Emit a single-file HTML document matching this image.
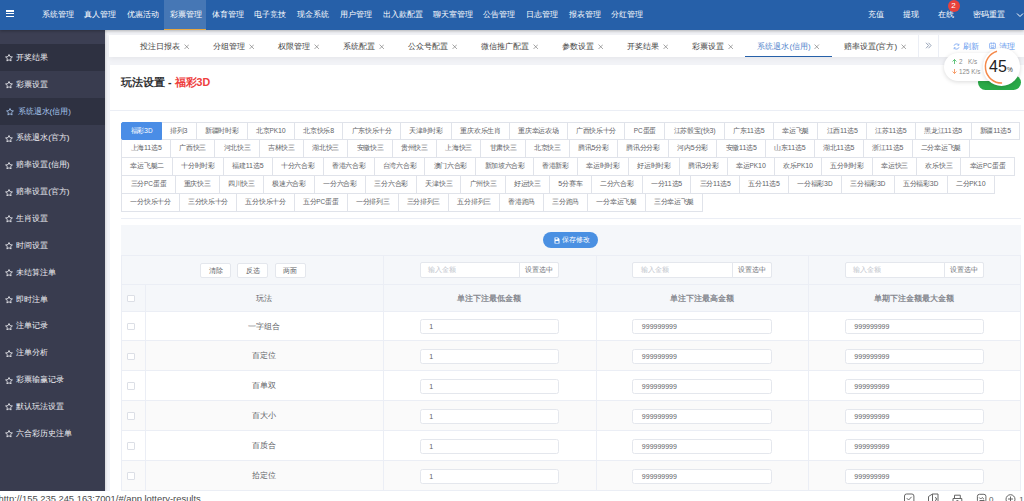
<!DOCTYPE html>
<html><head><meta charset="utf-8">
<style>
*{box-sizing:border-box;margin:0;padding:0}
html,body{width:1024px;height:501px;overflow:hidden;background:#f2f3f7;font-family:"Liberation Sans",sans-serif;color:#606266;position:relative}
div,span,svg{position:absolute}
#hdr{left:0;top:0;width:1024px;height:30px;background:#2660a9;box-shadow:0 1px 3px rgba(0,0,0,.28);z-index:5}
#hdr .hb{left:5.5px;width:8.2px;height:1.5px;background:#fff}
#hdr .mi{top:0;height:30px;line-height:29px;margin-left:0;font-size:8px;color:#fff;white-space:nowrap}
#hdr .actbg{left:164px;top:0;width:42px;height:30px;background:#4677b5;border-bottom:1.6px solid #e6a740}
#hdr .badge{left:947.5px;top:0;width:12px;height:12px;border-radius:50%;background:#e8413c;color:#fff;font-size:8px;line-height:12px;text-align:center}
#hdr .chev{left:1016px;top:12px}
#side{left:0;top:30px;width:105px;height:461px;background:#393c4f;z-index:3;box-shadow:1px 0 2px rgba(0,0,0,.12)}
#side .strip{left:0;top:0;width:105px;height:14px;background:#3c3f53}
#side .it{left:0;width:105px;height:26.86px;font-size:8px;color:#f0f0f4;white-space:nowrap}
#side .it span{top:0.9px;line-height:26.86px}
#side .it.dk{background:#2e3141}
#side .it.on{color:#a6c6ee}
#tabs{left:109px;top:35px;width:915px;height:22px;background:#fff;box-shadow:0 2px 5px rgba(0,0,0,.05)}
#tabs .tl{left:19.4px;top:0;height:22px;display:flex}
#tabs .t{position:relative;height:22px;line-height:23.6px;font-size:8px;color:#3d3d3d;white-space:nowrap;padding:0 12px 0 12px}
#tabs .t .x{position:relative;display:inline-block;margin-left:3.5px;vertical-align:-0.2px;color:#777}
#tabs .t.on{color:#5586cc;border-bottom:1.5px solid #2660a9}
#tabs .sep{top:0;width:1px;height:22px;background:#ebeef5}
#tabs .more{left:815.7px;top:7.4px}
#tabs .tool{top:0;height:22px;font-size:8px;color:#5b95ee;white-space:nowrap}
#tabs .tool span{top:0;line-height:22px}
#card{left:110px;top:65px;width:914px;height:436px;background:#fff}
#card .ttl{left:0;padding-left:11px;top:0;height:46.2px;line-height:34.5px;font-size:10.7px;font-weight:bold;color:#303133;white-space:nowrap;width:914px;border-bottom:1px solid #ebeef5}
#card .ttl span{position:static}
#card .red{color:#ee3d3d}
#lot{left:121.3px;top:121.5px;width:903px}
#lot .lr{position:relative;display:flex;margin-top:-1px}
#lot .lr:first-child{margin-top:0}
#lot .lb{position:relative;height:18.9px;line-height:16px;font-size:7px;letter-spacing:-0.3px;padding:0 var(--p);border:1px solid #e0e3ea;margin-left:-1px;background:#fff;white-space:nowrap;color:#606266}
#lot .lb:first-child{margin-left:0}
#lot .lb b{position:static;font-weight:normal;font-size:7px;letter-spacing:0}
#lot .lb u{position:static;text-decoration:none;font-size:6.4px}
#lot .lb.on{background:#4a8de6;border-color:#4a8de6;color:#fff;z-index:2;border-radius:2px 0 0 2px}
.hl{left:121px;width:899.6px;height:1px;background:#ebeef5}
#tbl{left:121px;top:225px;width:899.6px;height:266px;background:#f5f7fa}
#tbl .save{left:422.4px;top:7.4px;width:55.1px;height:15.6px;border-radius:8px;background:#4a90e2;color:#fff;font-size:7px}
#tbl .save span{left:19px;top:0;line-height:15.6px;white-space:nowrap}
#tbl .rowline{left:0;width:899.6px;height:1px;background:#ebeef5}
#tbl .fbtn{top:37.6px;width:31px;height:15px;border:1px solid #e4e7ed;border-radius:2px;background:#fff;font-size:7px;line-height:13px;text-align:center;color:#606266}
#tbl .ig{width:139.8px;height:15.3px;border:1px solid #e4e7ed;border-radius:2px;background:#fff}
#tbl .ig .ph{left:7.8px;top:0;line-height:13px;font-size:7px;color:#c0c4cc;white-space:nowrap}
#tbl .ig .ap{left:98.6px;top:-1px;width:40.2px;height:15.3px;border:1px solid #e4e7ed;border-radius:0 2px 2px 0;background:#fff;font-size:7px;line-height:13.3px;text-align:center;color:#6b6e75}
#tbl .cb{width:7.6px;height:7.6px;border:1px solid #dcdfe6;border-radius:1px;background:#fff}
#tbl .th{height:26.7px;line-height:30px;text-align:center;font-size:7.8px;color:#606266;white-space:nowrap}
#tbl .th.b{font-weight:bold;color:#85888f}
#tbl .dr{left:0;width:899.6px;height:29.9px;background:#fff;border-bottom:1px solid #ebeef5}
#tbl .dr.s{background:#fafafa}
#tbl .dr .pn{left:24.3px;width:237.8px;top:0;line-height:29px;text-align:center;font-size:7.8px;color:#606266;white-space:nowrap}
#tbl .inp{top:7.5px;width:139.6px;height:15.4px;border:1px solid #e4e7ed;border-radius:2.5px;background:#fff;font-size:7px;line-height:13.4px;padding-left:8.8px;color:#606266;white-space:nowrap}
#tbl .vl{width:1px;background:#ebeef5;z-index:2}
#green{left:978px;top:75px;width:42.8px;height:15px;border-radius:7.5px;background:#2aaa48;z-index:6}
#pill{left:944.1px;top:52.8px;width:60px;height:28px;border-radius:14px;background:#fff;box-shadow:0 1px 4px rgba(0,0,0,.15);z-index:7}
#pill .sp{font-size:6.3px;color:#8a8a8a;white-space:nowrap;line-height:9px}
#pill .sp b{font-weight:normal;margin-right:1px;position:static}
#circ{left:982.8px;top:48.3px;width:37.4px;height:37.4px;border-radius:50%;background:#fff;box-shadow:0 1px 4px rgba(0,0,0,.15);z-index:8}
#circ .n{left:6.2px;top:7.6px;font-size:16px;line-height:22px;color:#222}
#circ .pc{left:24.2px;top:18px;font-size:6.5px;line-height:8px;color:#333}
#status{left:0;top:491px;width:1024px;height:10px;background:#fff;z-index:9}
#status .url{left:-1.5px;top:2.4px;font-size:9.4px;line-height:11px;color:#4a4a4a;white-space:nowrap}

</style></head><body>
<div id="hdr"><div class="hb" style="top:10.2px"></div><div class="hb" style="top:12.9px"></div><div class="hb" style="top:15.6px"></div><div class="actbg"></div><div class="mi" style="left:41.5px">系统管理</div><div class="mi" style="left:84px">真人管理</div><div class="mi" style="left:126.5px">优惠活动</div><div class="mi" style="left:169.5px">彩票管理</div><div class="mi" style="left:212px">体育管理</div><div class="mi" style="left:254px">电子竞技</div><div class="mi" style="left:297px">现金系统</div><div class="mi" style="left:339.5px">用户管理</div><div class="mi" style="left:382.5px">出入款配置</div><div class="mi" style="left:432.5px">聊天室管理</div><div class="mi" style="left:483px">公告管理</div><div class="mi" style="left:526px">日志管理</div><div class="mi" style="left:568.5px">报表管理</div><div class="mi" style="left:611px">分红管理</div><div class="mi" style="left:867.9px">充值</div><div class="mi" style="left:902.9px">提现</div><div class="mi" style="left:938.3px">在线</div><div class="mi" style="left:973.3px">密码重置</div><div class="badge">2</div><svg class="chev" width="8" height="6" viewBox="0 0 8 6"><path d="M1 1.5l3 3 3-3" fill="none" stroke="#fff" stroke-width="1"/></svg></div>
<div id="side"><div class="strip"></div><div class="it dk" style="top:14.00px"><svg width="8" height="7.5" viewBox="1 1.5 22 20.5" style="position:absolute;left:5px;top:10.3px"><path d="M12 2.8l2.8 6 6.6.8-4.9 4.5 1.3 6.5L12 17.3l-5.8 3.3 1.3-6.5-4.9-4.5 6.6-.8z" fill="none" stroke="#f0f0f4" stroke-width="2.3" stroke-linejoin="round"/></svg><span style="left:16.2px">开奖结果</span></div><div class="it" style="top:40.86px"><svg width="8" height="7.5" viewBox="1 1.5 22 20.5" style="position:absolute;left:5px;top:10.3px"><path d="M12 2.8l2.8 6 6.6.8-4.9 4.5 1.3 6.5L12 17.3l-5.8 3.3 1.3-6.5-4.9-4.5 6.6-.8z" fill="none" stroke="#f0f0f4" stroke-width="2.3" stroke-linejoin="round"/></svg><span style="left:16.2px">彩票设置</span></div><div class="it dk on" style="top:67.72px"><svg width="8" height="7.5" viewBox="1 1.5 22 20.5" style="position:absolute;left:6.4px;top:10.3px"><path d="M12 2.8l2.8 6 6.6.8-4.9 4.5 1.3 6.5L12 17.3l-5.8 3.3 1.3-6.5-4.9-4.5 6.6-.8z" fill="none" stroke="#a6c6ee" stroke-width="2.3" stroke-linejoin="round"/></svg><span style="left:17.6px">系统退水(信用)</span></div><div class="it" style="top:94.58px"><svg width="8" height="7.5" viewBox="1 1.5 22 20.5" style="position:absolute;left:5px;top:10.3px"><path d="M12 2.8l2.8 6 6.6.8-4.9 4.5 1.3 6.5L12 17.3l-5.8 3.3 1.3-6.5-4.9-4.5 6.6-.8z" fill="none" stroke="#f0f0f4" stroke-width="2.3" stroke-linejoin="round"/></svg><span style="left:16.2px">系统退水(官方)</span></div><div class="it" style="top:121.44px"><svg width="8" height="7.5" viewBox="1 1.5 22 20.5" style="position:absolute;left:5px;top:10.3px"><path d="M12 2.8l2.8 6 6.6.8-4.9 4.5 1.3 6.5L12 17.3l-5.8 3.3 1.3-6.5-4.9-4.5 6.6-.8z" fill="none" stroke="#f0f0f4" stroke-width="2.3" stroke-linejoin="round"/></svg><span style="left:16.2px">赔率设置(信用)</span></div><div class="it" style="top:148.30px"><svg width="8" height="7.5" viewBox="1 1.5 22 20.5" style="position:absolute;left:5px;top:10.3px"><path d="M12 2.8l2.8 6 6.6.8-4.9 4.5 1.3 6.5L12 17.3l-5.8 3.3 1.3-6.5-4.9-4.5 6.6-.8z" fill="none" stroke="#f0f0f4" stroke-width="2.3" stroke-linejoin="round"/></svg><span style="left:16.2px">赔率设置(官方)</span></div><div class="it" style="top:175.16px"><svg width="8" height="7.5" viewBox="1 1.5 22 20.5" style="position:absolute;left:5px;top:10.3px"><path d="M12 2.8l2.8 6 6.6.8-4.9 4.5 1.3 6.5L12 17.3l-5.8 3.3 1.3-6.5-4.9-4.5 6.6-.8z" fill="none" stroke="#f0f0f4" stroke-width="2.3" stroke-linejoin="round"/></svg><span style="left:16.2px">生肖设置</span></div><div class="it" style="top:202.02px"><svg width="8" height="7.5" viewBox="1 1.5 22 20.5" style="position:absolute;left:5px;top:10.3px"><path d="M12 2.8l2.8 6 6.6.8-4.9 4.5 1.3 6.5L12 17.3l-5.8 3.3 1.3-6.5-4.9-4.5 6.6-.8z" fill="none" stroke="#f0f0f4" stroke-width="2.3" stroke-linejoin="round"/></svg><span style="left:16.2px">时间设置</span></div><div class="it" style="top:228.88px"><svg width="8" height="7.5" viewBox="1 1.5 22 20.5" style="position:absolute;left:5px;top:10.3px"><path d="M12 2.8l2.8 6 6.6.8-4.9 4.5 1.3 6.5L12 17.3l-5.8 3.3 1.3-6.5-4.9-4.5 6.6-.8z" fill="none" stroke="#f0f0f4" stroke-width="2.3" stroke-linejoin="round"/></svg><span style="left:16.2px">未结算注单</span></div><div class="it" style="top:255.74px"><svg width="8" height="7.5" viewBox="1 1.5 22 20.5" style="position:absolute;left:5px;top:10.3px"><path d="M12 2.8l2.8 6 6.6.8-4.9 4.5 1.3 6.5L12 17.3l-5.8 3.3 1.3-6.5-4.9-4.5 6.6-.8z" fill="none" stroke="#f0f0f4" stroke-width="2.3" stroke-linejoin="round"/></svg><span style="left:16.2px">即时注单</span></div><div class="it" style="top:282.60px"><svg width="8" height="7.5" viewBox="1 1.5 22 20.5" style="position:absolute;left:5px;top:10.3px"><path d="M12 2.8l2.8 6 6.6.8-4.9 4.5 1.3 6.5L12 17.3l-5.8 3.3 1.3-6.5-4.9-4.5 6.6-.8z" fill="none" stroke="#f0f0f4" stroke-width="2.3" stroke-linejoin="round"/></svg><span style="left:16.2px">注单记录</span></div><div class="it" style="top:309.46px"><svg width="8" height="7.5" viewBox="1 1.5 22 20.5" style="position:absolute;left:5px;top:10.3px"><path d="M12 2.8l2.8 6 6.6.8-4.9 4.5 1.3 6.5L12 17.3l-5.8 3.3 1.3-6.5-4.9-4.5 6.6-.8z" fill="none" stroke="#f0f0f4" stroke-width="2.3" stroke-linejoin="round"/></svg><span style="left:16.2px">注单分析</span></div><div class="it" style="top:336.32px"><svg width="8" height="7.5" viewBox="1 1.5 22 20.5" style="position:absolute;left:5px;top:10.3px"><path d="M12 2.8l2.8 6 6.6.8-4.9 4.5 1.3 6.5L12 17.3l-5.8 3.3 1.3-6.5-4.9-4.5 6.6-.8z" fill="none" stroke="#f0f0f4" stroke-width="2.3" stroke-linejoin="round"/></svg><span style="left:16.2px">彩票输赢记录</span></div><div class="it" style="top:363.18px"><svg width="8" height="7.5" viewBox="1 1.5 22 20.5" style="position:absolute;left:5px;top:10.3px"><path d="M12 2.8l2.8 6 6.6.8-4.9 4.5 1.3 6.5L12 17.3l-5.8 3.3 1.3-6.5-4.9-4.5 6.6-.8z" fill="none" stroke="#f0f0f4" stroke-width="2.3" stroke-linejoin="round"/></svg><span style="left:16.2px">默认玩法设置</span></div><div class="it" style="top:390.04px"><svg width="8" height="7.5" viewBox="1 1.5 22 20.5" style="position:absolute;left:5px;top:10.3px"><path d="M12 2.8l2.8 6 6.6.8-4.9 4.5 1.3 6.5L12 17.3l-5.8 3.3 1.3-6.5-4.9-4.5 6.6-.8z" fill="none" stroke="#f0f0f4" stroke-width="2.3" stroke-linejoin="round"/></svg><span style="left:16.2px">六合彩历史注单</span></div></div>
<div id="tabs"><div class="tl"><div class="t">投注日报表<svg class="x" width="5.5" height="5.5" viewBox="0 0 10 10"><path d="M1 1L9 9M9 1L1 9" stroke="currentColor" stroke-width="1.2"/></svg></div><div class="t">分组管理<svg class="x" width="5.5" height="5.5" viewBox="0 0 10 10"><path d="M1 1L9 9M9 1L1 9" stroke="currentColor" stroke-width="1.2"/></svg></div><div class="t">权限管理<svg class="x" width="5.5" height="5.5" viewBox="0 0 10 10"><path d="M1 1L9 9M9 1L1 9" stroke="currentColor" stroke-width="1.2"/></svg></div><div class="t">系统配置<svg class="x" width="5.5" height="5.5" viewBox="0 0 10 10"><path d="M1 1L9 9M9 1L1 9" stroke="currentColor" stroke-width="1.2"/></svg></div><div class="t">公众号配置<svg class="x" width="5.5" height="5.5" viewBox="0 0 10 10"><path d="M1 1L9 9M9 1L1 9" stroke="currentColor" stroke-width="1.2"/></svg></div><div class="t">微信推广配置<svg class="x" width="5.5" height="5.5" viewBox="0 0 10 10"><path d="M1 1L9 9M9 1L1 9" stroke="currentColor" stroke-width="1.2"/></svg></div><div class="t">参数设置<svg class="x" width="5.5" height="5.5" viewBox="0 0 10 10"><path d="M1 1L9 9M9 1L1 9" stroke="currentColor" stroke-width="1.2"/></svg></div><div class="t">开奖结果<svg class="x" width="5.5" height="5.5" viewBox="0 0 10 10"><path d="M1 1L9 9M9 1L1 9" stroke="currentColor" stroke-width="1.2"/></svg></div><div class="t">彩票设置<svg class="x" width="5.5" height="5.5" viewBox="0 0 10 10"><path d="M1 1L9 9M9 1L1 9" stroke="currentColor" stroke-width="1.2"/></svg></div><div class="t on">系统退水(信用)<svg class="x" width="5.5" height="5.5" viewBox="0 0 10 10"><path d="M1 1L9 9M9 1L1 9" stroke="currentColor" stroke-width="1.2"/></svg></div><div class="t">赔率设置(官方)<svg class="x" width="5.5" height="5.5" viewBox="0 0 10 10"><path d="M1 1L9 9M9 1L1 9" stroke="currentColor" stroke-width="1.2"/></svg></div></div><div class="sep" style="left:808.5px"></div><div class="sep" style="left:829.3px"></div><svg class="more" width="7" height="7" viewBox="0 0 14 14"><path d="M2 1.5l5 5.5-5 5.5M7 1.5l5 5.5-5 5.5" fill="none" stroke="#8c9ab0" stroke-width="1.8"/></svg><div class="tool" style="left:844.4px"><svg width="7" height="7" viewBox="0 0 14 14" style="position:absolute;left:0;top:7.8px"><path d="M2 5.5A5.2 5.2 0 0 1 11.3 4M12 8.5A5.2 5.2 0 0 1 2.7 10" fill="none" stroke="#6a9cf0" stroke-width="1.5"/><path d="M11.8 1.5v3h-3M2.2 12.5v-3h3" fill="none" stroke="#6a9cf0" stroke-width="1.4"/></svg><span style="left:10px;top:1px">刷新</span></div><div class="tool" style="left:880px"><svg width="7" height="7" viewBox="0 0 14 14" style="position:absolute;left:0;top:7.3px"><rect x="1" y="2.5" width="12" height="10.5" rx="1.5" fill="none" stroke="#6a9cf0" stroke-width="1.3"/><path d="M4.5 1v4M9.5 1v4M4 7.5h6v3.5H4z" fill="none" stroke="#6a9cf0" stroke-width="1.2"/></svg><span style="left:10.3px;top:1px">清理</span></div></div>
<div id="card"><div class="ttl">玩法设置 <span class="dash">-</span> <span class="red">福彩3D</span></div></div>
<div id="lot"><div class="lr" style="--p:8.294px"><div class="lb on">福彩<b>3<u>D</u></b></div><div class="lb">排列<b>3</b></div><div class="lb">新疆时时彩</div><div class="lb">北京<b><u>PK</u>10</b></div><div class="lb">北京快乐<b>8</b></div><div class="lb">广东快乐十分</div><div class="lb">天津时时彩</div><div class="lb">重庆欢乐生肖</div><div class="lb">重庆幸运农场</div><div class="lb">广西快乐十分</div><div class="lb"><b><u>PC</u></b>蛋蛋</div><div class="lb">江苏骰宝<b>(</b>快<b>3)</b></div><div class="lb">广东<b>11</b>选<b>5</b></div><div class="lb">幸运飞艇</div><div class="lb">江西<b>11</b>选<b>5</b></div><div class="lb">江苏<b>11</b>选<b>5</b></div><div class="lb">黑龙江<b>11</b>选<b>5</b></div><div class="lb">新疆<b>11</b>选<b>5</b></div></div><div class="lr" style="--p:8.2625px"><div class="lb">上海<b>11</b>选<b>5</b></div><div class="lb">广西快三</div><div class="lb">河北快三</div><div class="lb">吉林快三</div><div class="lb">湖北快三</div><div class="lb">安徽快三</div><div class="lb">贵州快三</div><div class="lb">上海快三</div><div class="lb">甘肃快三</div><div class="lb">北京快三</div><div class="lb">腾讯<b>5</b>分彩</div><div class="lb">腾讯分分彩</div><div class="lb">河内<b>5</b>分彩</div><div class="lb">安徽<b>11</b>选<b>5</b></div><div class="lb">山东<b>11</b>选<b>5</b></div><div class="lb">湖北<b>11</b>选<b>5</b></div><div class="lb">浙江<b>11</b>选<b>5</b></div><div class="lb">二分幸运飞艇</div></div><div class="lr" style="--p:8.2px"><div class="lb">幸运飞艇二</div><div class="lb">十分时时彩</div><div class="lb">福建<b>11</b>选<b>5</b></div><div class="lb">十分六合彩</div><div class="lb">香港六合彩</div><div class="lb">台湾六合彩</div><div class="lb">澳门六合彩</div><div class="lb">新加坡六合彩</div><div class="lb">香港新彩</div><div class="lb">幸运时时彩</div><div class="lb">好运时时彩</div><div class="lb">腾讯<b>3</b>分彩</div><div class="lb">幸运<b><u>PK</u>10</b></div><div class="lb">欢乐<b><u>PK</u>10</b></div><div class="lb">五分时时彩</div><div class="lb">幸运快三</div><div class="lb">欢乐快三</div><div class="lb">幸运<b><u>PC</u></b>蛋蛋</div></div><div class="lr" style="--p:8.258px"><div class="lb">三分<b><u>PC</u></b>蛋蛋</div><div class="lb">重庆快三</div><div class="lb">四川快三</div><div class="lb">极速六合彩</div><div class="lb">一分六合彩</div><div class="lb">三分六合彩</div><div class="lb">天津快三</div><div class="lb">广州快三</div><div class="lb">好运快三</div><div class="lb"><b>5</b>分赛车</div><div class="lb">二分六合彩</div><div class="lb">一分<b>11</b>选<b>5</b></div><div class="lb">三分<b>11</b>选<b>5</b></div><div class="lb">五分<b>11</b>选<b>5</b></div><div class="lb">一分福彩<b>3<u>D</u></b></div><div class="lb">三分福彩<b>3<u>D</u></b></div><div class="lb">五分福彩<b>3<u>D</u></b></div><div class="lb">二分<b><u>PK</u>10</b></div></div><div class="lr" style="--p:8.145px"><div class="lb">一分快乐十分</div><div class="lb">三分快乐十分</div><div class="lb">五分快乐十分</div><div class="lb">五分<b><u>PC</u></b>蛋蛋</div><div class="lb">一分排列三</div><div class="lb">三分排列三</div><div class="lb">五分排列三</div><div class="lb">香港跑马</div><div class="lb">三分跑马</div><div class="lb">一分幸运飞艇</div><div class="lb">三分幸运飞艇</div></div></div>
<div class="hl" style="top:218px"></div>
<div id="tbl"><div class="save"><svg width="6" height="7" viewBox="0 0 12 14" style="position:absolute;left:10.6px;top:4.6px"><path d="M1 1h7l3 3v9H1z" fill="#fff"/><rect x="3" y="8" width="6" height="4" fill="#4a90e2"/><rect x="3" y="2" width="4" height="3" fill="#4a90e2"/></svg><span>保存修改</span></div><div class="rowline" style="top:30px"></div><div class="fbtn" style="left:79.3px">清除</div><div class="fbtn" style="left:116.2px">反选</div><div class="fbtn" style="left:153.5px">两面</div><div class="ig" style="left:298.55px;top:37.4px"><span class="ph">输入金额</span><div class="ap">设置选中</div></div><div class="ig" style="left:511.00px;top:37.4px"><span class="ph">输入金额</span><div class="ap">设置选中</div></div><div class="ig" style="left:723.50px;top:37.4px"><span class="ph">输入金额</span><div class="ap">设置选中</div></div><div class="rowline" style="top:59.4px"></div><div class="cb" style="left:6.3px;top:69.6px"></div><div class="th" style="left:24.3px;width:237.8px;top:59.4px">玩法</div><div class="th b" style="left:262.10px;width:212.5px;top:59.4px">单注下注最低金额</div><div class="th b" style="left:474.60px;width:212.5px;top:59.4px">单注下注最高金额</div><div class="th b" style="left:687.10px;width:212.5px;top:59.4px">单期下注金额最大金额</div><div class="rowline" style="top:86.1px"></div><div class="dr" style="top:86.50px"><div class="cb" style="left:6.1px;top:11.2px"></div><div class="pn">一字组合</div><div class="inp" style="left:298.55px">1</div><div class="inp" style="left:511.05px">999999999</div><div class="inp" style="left:723.55px">999999999</div></div><div class="dr s" style="top:116.40px"><div class="cb" style="left:6.1px;top:11.2px"></div><div class="pn">百定位</div><div class="inp" style="left:298.55px">1</div><div class="inp" style="left:511.05px">999999999</div><div class="inp" style="left:723.55px">999999999</div></div><div class="dr" style="top:146.30px"><div class="cb" style="left:6.1px;top:11.2px"></div><div class="pn">百单双</div><div class="inp" style="left:298.55px">1</div><div class="inp" style="left:511.05px">999999999</div><div class="inp" style="left:723.55px">999999999</div></div><div class="dr s" style="top:176.20px"><div class="cb" style="left:6.1px;top:11.2px"></div><div class="pn">百大小</div><div class="inp" style="left:298.55px">1</div><div class="inp" style="left:511.05px">999999999</div><div class="inp" style="left:723.55px">999999999</div></div><div class="dr" style="top:206.10px"><div class="cb" style="left:6.1px;top:11.2px"></div><div class="pn">百质合</div><div class="inp" style="left:298.55px">1</div><div class="inp" style="left:511.05px">999999999</div><div class="inp" style="left:723.55px">999999999</div></div><div class="dr s" style="top:236.00px"><div class="cb" style="left:6.1px;top:11.2px"></div><div class="pn">拾定位</div><div class="inp" style="left:298.55px">1</div><div class="inp" style="left:511.05px">999999999</div><div class="inp" style="left:723.55px">999999999</div></div><div class="vl" style="left:24.3px;top:59.4px;height:206.6px"></div><div class="vl" style="left:262.1px;top:30px;height:236px"></div><div class="vl" style="left:474.6px;top:30px;height:236px"></div><div class="vl" style="left:687.0px;top:30px;height:236px"></div><div class="vl" style="left:0px;top:30px;height:236px"></div><div class="vl" style="left:898.6px;top:30px;height:236px"></div></div>
<div id="green"></div><div id="pill"><svg width="5" height="5" viewBox="0 0 10 10" style="left:7.9px;top:6.6px"><path d="M5 10V1M1 5l4-4 4 4" fill="none" stroke="#3cb55a" stroke-width="1.6"/></svg><svg width="5" height="5" viewBox="0 0 10 10" style="left:7.9px;top:15.9px"><path d="M5 0v9M1 5l4 4 4-4" fill="none" stroke="#f5894a" stroke-width="1.6"/></svg><div class="sp" style="left:15px;top:4px">2</div><div class="sp" style="left:24px;top:4px">K/s</div><div class="sp" style="left:15px;top:14px">125 K/s</div></div><div id="circ"><svg width="38" height="38" viewBox="0 0 38 38" style="position:absolute;left:0;top:0"><path d="M14.0 3.27 A16.2 16.2 0 0 0 19.1 35.0" fill="none" stroke="#f5894a" stroke-width="1.5"/></svg><span class="n">45</span><span class="pc">%</span></div><div id="status"><span class="url">http://155.235.245.163:7001/#/app.lottery-results</span><svg width="120" height="10" viewBox="0 0 120 10" style="left:904px;top:0"><g fill="none" stroke="#666" stroke-width="1"><rect x="0.5" y="3" width="9.4" height="9" rx="2"/><path d="M2.8 7.2l1.8 1.8 3-3.2"/><path d="M24.5 12V5.5l4-2.5h5.5v9M28.5 3v9M31 6.5a1.5 1.5 0 1 1 0 3"/><path d="M49 12V7.5h8.8V12M50.5 7.5V4.2h5.8v3.3M53.4 9l-1.6 2h3.2z"/><rect x="73.4" y="3.3" width="8.5" height="8" rx="2"/><path d="M75.2 6.5l1.5 1.5 1.5-1.5 1.8 1.8M75.5 9.5h5"/><circle cx="106.5" cy="8.2" r="4.5"/><path d="M106.5 5.5v5M104 8h5"/></g><text x="85" y="10.5" font-size="8" fill="#555" font-family="Liberation Sans">0</text><text x="115.2" y="10.5" font-size="8" fill="#555" font-family="Liberation Sans">1</text></svg></div></body></html>
